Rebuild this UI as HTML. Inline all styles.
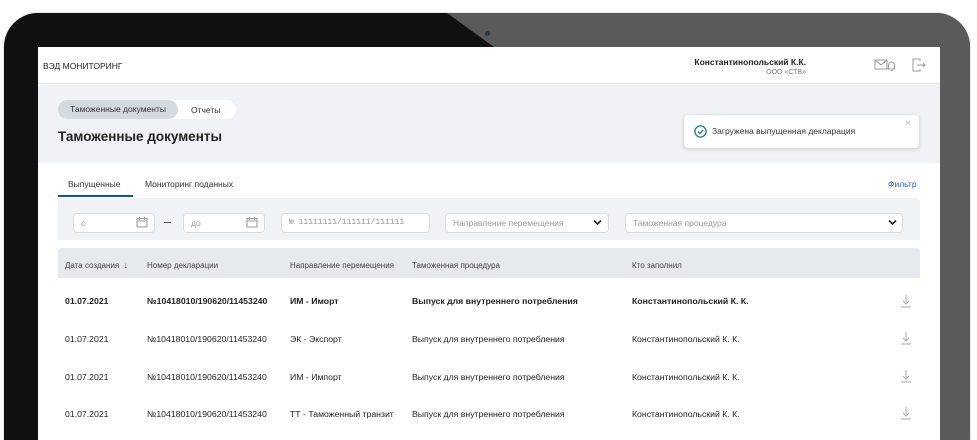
<!DOCTYPE html>
<html><head><meta charset="utf-8"><style>
*{margin:0;padding:0;box-sizing:border-box}
html,body{width:977px;height:440px;overflow:hidden;background:#fff}
body{position:relative;font-family:"Liberation Sans",sans-serif;color:#222}
.wrap{position:absolute;left:0;top:0;width:977px;height:440px;overflow:hidden}
.bezel{position:absolute;left:4px;top:13px;width:966px;height:427px;border-radius:34px 34px 0 0;background:#111;overflow:hidden;box-shadow:0 0 2px #bbb}
.bezel .gray{position:absolute;left:0;top:0;width:100%;height:100%;background:#5a5a5a;clip-path:polygon(443px 0,100% 0,100% 100%,490px 100%,490px 34px)}
.cam{position:absolute;left:485px;top:31px;width:5px;height:5px;border-radius:50%;background:#2a3550}
.screen{position:absolute;left:38px;top:47px;width:902px;height:393px;background:#fff;overflow:hidden}
.abs{position:absolute;white-space:nowrap}
.hdr{height:37px;border-bottom:1px solid #e1e4ea}
.grayarea{position:absolute;left:0;top:38px;width:100%;height:78px;background:#f0f2f5}
.pill{position:absolute;left:20px;top:53px;height:19px;width:178px;background:#fff;border-radius:10px}
.pill .on{position:absolute;left:0;top:0;height:19px;width:120px;background:#d5dae1;border-radius:10px;font-size:8.5px;line-height:19px;text-align:center;color:#333}
.input{position:absolute;top:166px;height:20px;background:#fff;border:1px solid #d9dde3;border-radius:4px;font-size:8.5px;color:#999;line-height:18px;padding-left:7px}
.th{position:absolute;top:214px;font-size:8px;color:#444}
.row{font-size:8.7px;position:absolute}
.dl{position:absolute;width:12px;height:14px}
</style></head><body><div class="wrap">
<div class="bezel"><div class="gray"></div></div>
<div class="cam"></div>
<div class="screen">
  <div class="hdr"></div>
  <div class="abs" style="left:5px;top:14px;font-size:8.5px">ВЭД МОНИТОРИНГ</div>
  <div class="abs" style="right:134px;top:10px;font-size:8.5px;font-weight:bold">Константинопольский К.К.</div>
  <div class="abs" style="right:134px;top:22px;font-size:7px;color:#777">ООО «СТВ»</div>
  <svg class="abs" style="left:836px;top:11px" width="22" height="14" viewBox="0 0 22 14" fill="none" stroke="#999" stroke-width="1"><path d="M1 2h12v9H1z M1 2l6 5 6-5"/><path d="M13 11h8 M14.5 11V7a3 3 0 016 0v4 M16.5 12.5h2"/></svg>
  <svg class="abs" style="left:874px;top:11px" width="14" height="14" viewBox="0 0 14 14" fill="none" stroke="#999" stroke-width="1"><path d="M8 3V1H1v12h7v-2 M5 7h8 M11 5l2 2-2 2"/></svg>
  <div class="grayarea"></div>
  <div class="pill"><div class="on">Таможенные документы</div><div class="abs" style="left:133px;top:5px;font-size:8.5px;color:#333">Отчеты</div></div>
  <div class="abs" style="left:20px;top:82px;font-size:13.5px;font-weight:bold;color:#222">Таможенные документы</div>
  <div class="abs" style="left:646px;top:68px;width:235px;height:33px;background:#fff;border-radius:4px;box-shadow:0 1px 4px rgba(0,0,0,.18)">
    <svg class="abs" style="left:10px;top:10px" width="13" height="13" viewBox="0 0 13 13" fill="none" stroke="#1f7f8a" stroke-width="1.3"><circle cx="6.5" cy="6.5" r="5.6"/><path d="M4 6.6l1.8 1.8L9 5"/></svg>
    <div class="abs" style="left:28px;top:11px;font-size:8.5px;color:#333">Загружена выпущенная декларация</div>
    <div class="abs" style="left:221px;top:3px;font-size:10px;color:#bbb">×</div>
  </div>
  <div class="abs" style="left:30px;top:132px;font-size:8.5px;color:#333">Выпущенные</div>
  <div class="abs" style="left:20px;top:148px;width:75px;height:2px;background:#0e5a7e"></div>
  <div class="abs" style="left:107px;top:132px;font-size:8.5px;color:#333">Мониторинг поданных</div>
  <div class="abs" style="left:850px;top:132px;font-size:8.5px;color:#2a64b8">Фильтр</div>
  <div class="abs" style="left:20px;top:151px;width:862px;height:42px;background:#f0f2f5;border-radius:0 4px 0 0"></div>
  <div class="input" style="left:35px;width:82px">с</div>
  <svg class="abs" style="left:98px;top:169px" width="12" height="12" viewBox="0 0 12 12" fill="none" stroke="#999"><rect x="1" y="2.5" width="10" height="8.5"/><path d="M1 5h10 M3.5 1v3 M8.5 1v3"/></svg>
  <div class="abs" style="left:126px;top:175px;width:7px;height:1.2px;background:#555"></div>
  <div class="input" style="left:145px;width:82px">до</div>
  <svg class="abs" style="left:208px;top:169px" width="12" height="12" viewBox="0 0 12 12" fill="none" stroke="#999"><rect x="1" y="2.5" width="10" height="8.5"/><path d="M1 5h10 M3.5 1v3 M8.5 1v3"/></svg>
  <div class="input" style="left:243px;width:149px;font-family:'Liberation Mono',monospace;font-size:8px">№ 11111111/111111/111111</div>
  <div class="input" style="left:407px;width:164px">Направление перемещения</div>
  <svg class="abs" style="left:555px;top:172px" width="9" height="7" viewBox="0 0 9 7" fill="none" stroke="#222" stroke-width="1.6"><path d="M1 1.5l3.5 3.5 3.5-3.5"/></svg>
  <div class="input" style="left:587px;width:278px">Таможенная процедура</div>
  <svg class="abs" style="left:850px;top:172px" width="9" height="7" viewBox="0 0 9 7" fill="none" stroke="#222" stroke-width="1.6"><path d="M1 1.5l3.5 3.5 3.5-3.5"/></svg>
  <div class="abs" style="left:20px;top:201px;width:862px;height:30px;background:#e6e9ee;border-radius:4px 4px 0 0"></div>
  <div class="th" style="left:27px">Дата создания &nbsp;↓</div>
  <div class="th" style="left:109px">Номер декларации</div>
  <div class="th" style="left:252px">Направление перемещения</div>
  <div class="th" style="left:374px">Таможенная процедура</div>
  <div class="th" style="left:594px">Кто заполнил</div>

  <div class="row" style="top:249px;left:27px;font-weight:bold">01.07.2021</div>
  <div class="row" style="top:249px;left:109px;font-weight:bold">№10418010/190620/11453240</div>
  <div class="row" style="top:249px;left:252px;font-weight:bold">ИМ - Иморт</div>
  <div class="row" style="top:249px;left:374px;font-weight:bold">Выпуск для внутреннего потребления</div>
  <div class="row" style="top:249px;left:594px;font-weight:bold">Константинопольский К. К.</div>

  <div class="row" style="top:287px;left:27px">01.07.2021</div>
  <div class="row" style="top:287px;left:109px">№10418010/190620/11453240</div>
  <div class="row" style="top:287px;left:252px">ЭК - Экспорт</div>
  <div class="row" style="top:287px;left:374px">Выпуск для внутреннего потребления</div>
  <div class="row" style="top:287px;left:594px">Константинопольский К. К.</div>

  <div class="row" style="top:325px;left:27px">01.07.2021</div>
  <div class="row" style="top:325px;left:109px">№10418010/190620/11453240</div>
  <div class="row" style="top:325px;left:252px">ИМ - Импорт</div>
  <div class="row" style="top:325px;left:374px">Выпуск для внутреннего потребления</div>
  <div class="row" style="top:325px;left:594px">Константинопольский К. К.</div>

  <div class="row" style="top:362px;left:27px">01.07.2021</div>
  <div class="row" style="top:362px;left:109px">№10418010/190620/11453240</div>
  <div class="row" style="top:362px;left:252px">ТТ - Таможенный транзит</div>
  <div class="row" style="top:362px;left:374px">Выпуск для внутреннего потребления</div>
  <div class="row" style="top:362px;left:594px">Константинопольский К. К.</div>

  <svg class="dl" style="left:862px;top:247px" viewBox="0 0 12 14" fill="none" stroke="#aaa"><path d="M6 1v9 M3 7l3 3 3-3 M1 13h10"/></svg>
  <svg class="dl" style="left:862px;top:284px" viewBox="0 0 12 14" fill="none" stroke="#aaa"><path d="M6 1v9 M3 7l3 3 3-3 M1 13h10"/></svg>
  <svg class="dl" style="left:862px;top:322px" viewBox="0 0 12 14" fill="none" stroke="#aaa"><path d="M6 1v9 M3 7l3 3 3-3 M1 13h10"/></svg>
  <svg class="dl" style="left:862px;top:359px" viewBox="0 0 12 14" fill="none" stroke="#aaa"><path d="M6 1v9 M3 7l3 3 3-3 M1 13h10"/></svg>
</div>
</div></body></html>
